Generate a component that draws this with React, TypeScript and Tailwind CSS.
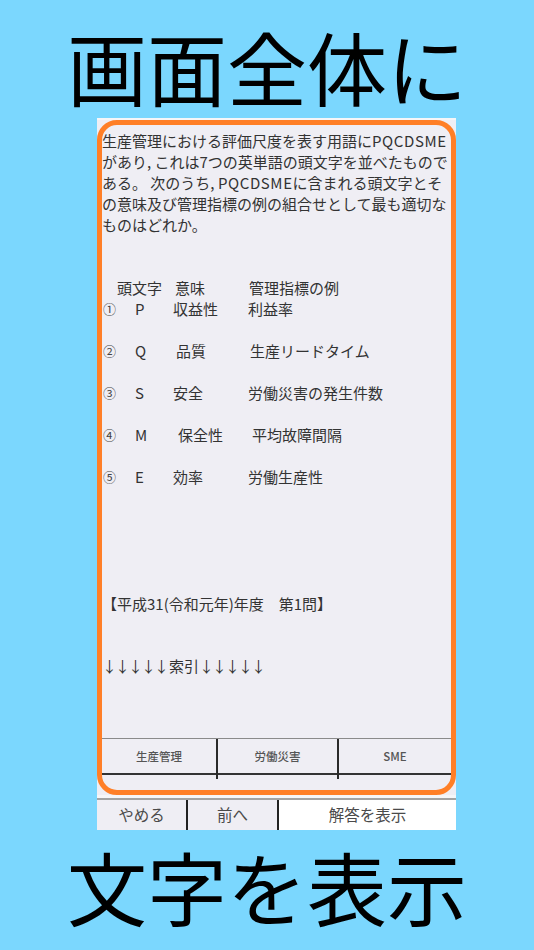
const jp = { fontFamily: '"Noto Sans CJK JP", "Noto Sans", sans-serif' };

const rows = [
  { no: "①", letter: "P", lw: "w-[38px]", meaning: "収益性", mw: "w-[75px]", example: "利益率" },
  { no: "②", letter: "Q", lw: "w-[41px]", meaning: "品質", mw: "w-[74px]", example: "生産リードタイム" },
  { no: "③", letter: "S", lw: "w-[38px]", meaning: "安全", mw: "w-[75px]", example: "労働災害の発生件数" },
  { no: "④", letter: "M", lw: "w-[43px]", meaning: "保全性", mw: "w-[74px]", example: "平均故障間隔" },
  { no: "⑤", letter: "E", lw: "w-[38px]", meaning: "効率", mw: "w-[75px]", example: "労働生産性" },
];

function Title({ text }: { text: string }) {
  return (
    <div className="text-center text-[80px] leading-none text-black" style={jp}>
      {text}
    </div>
  );
}

function QuestionScreen() {
  return (
    <div className="ml-[97px] w-[359px] h-[712px] bg-[#efeef4] flex flex-col" style={jp}>
      <div className="h-[2px] bg-[#f6f6f8]" />

      {/* Orange frame */}
      <div className="h-[675px] border-[5px] border-[#ff7f27] rounded-[20px] flex flex-col text-[15px] leading-[21px] text-[#333]">
        <div className="pt-[4.5px] whitespace-nowrap">
          <p>生産管理における評価尺度を表す用語に<span className="tracking-[0.6px]">PQCDSME</span></p>
          <p>があり, これは7つの英単語の頭文字を並べたもので</p>
          <p>ある。 次のうち, <span className="tracking-[0.6px]">PQCDSME</span>に含まれる頭文字とそ</p>
          <p>の意味及び管理指標の例の組合せとして最も適切な</p>
          <p>ものはどれか。</p>
        </div>

        {/* Table */}
        <div className="mt-[42px] whitespace-nowrap">
          <div className="flex pl-[15px]">
            <span className="w-[58px]">頭文字</span>
            <span className="w-[74px]">意味</span>
            <span>管理指標の例</span>
          </div>
          {rows.map((r, i) => (
            <div key={r.letter} className={`flex items-center ${i > 0 ? "mt-[21px]" : ""}`}>
              <span className="w-[33px] pl-px text-[13px] leading-[21px] text-[#444]">{r.no}</span>
              <span className={r.lw}>{r.letter}</span>
              <span className={r.mw}>{r.meaning}</span>
              <span>{r.example}</span>
            </div>
          ))}
        </div>

        <p className="mt-[106px] whitespace-nowrap">【平成31(令和元年)年度　第1問】</p>
        <p className="mt-[41px] whitespace-nowrap text-[#333]">
          <span className="tracking-[-2px]">↓↓↓↓↓</span>
          <span className="ml-[2px]">索引</span>
          <span className="tracking-[-2px]">↓↓↓↓↓</span>
        </p>

        <div className="flex-1" />

        {/* Index tabs */}
        <div className="flex border-t-[1.5px] border-[#8a8a8a] mb-[11px]">
          {["生産管理", "労働災害", "SME"].map((t, i) => (
            <div
              key={t}
              className={`flex flex-col ${i === 0 ? "w-[114px]" : i === 1 ? "w-[121px] border-l-2 border-[#2a2a2a]" : "flex-1 border-l-2 border-[#2a2a2a]"}`}
            >
              <div className="h-[34px] flex items-center justify-center text-[11.5px] text-[#555] font-medium">
                {t}
              </div>
              <div className="h-[2px] bg-[#333]" />
              <div className="h-[4px]" />
            </div>
          ))}
        </div>
      </div>

      <div className="h-[3px] bg-[#f6f6f8]" />

      {/* Bottom buttons */}
      <div className="h-[32px] flex border-t-2 border-[#a3a3a3] text-[15.5px] text-[#4a4a4a]">
        <div className="w-[89px] flex items-center justify-center">やめる</div>
        <div className="w-[91px] border-l-2 border-[#222] flex items-center justify-center">前へ</div>
        <div className="flex-1 border-l-2 border-[#222] bg-white flex items-center justify-center">解答を表示</div>
      </div>
    </div>
  );
}

export default function App() {
  return (
    <div className="w-full h-[950px] bg-[#7bd7fe] flex flex-col overflow-hidden">
      <div className="h-[118px] pt-[25px]">
        <Title text="画面全体に" />
      </div>
      <QuestionScreen />
      <div className="flex-1 pt-[15px]">
        <Title text="文字を表示" />
      </div>
    </div>
  );
}
